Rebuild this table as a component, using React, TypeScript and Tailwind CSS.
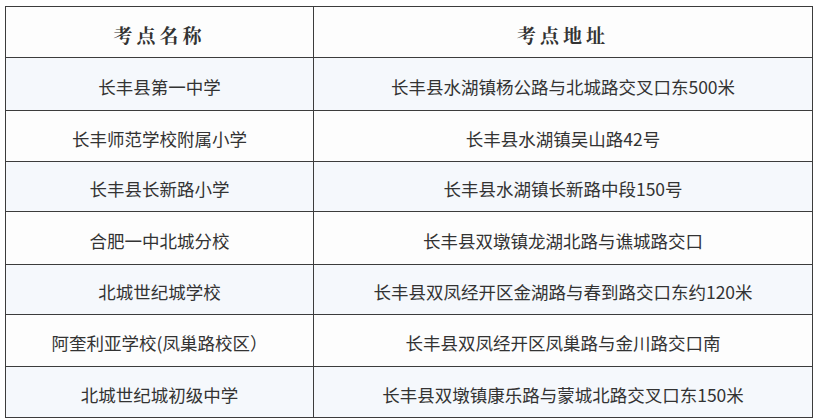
import React from "react";

const rows: [string, string, string][] = [
  ["长丰县第一中学", "长丰县水湖镇杨公路与北城路交叉口东500米", "h-[53px] bg-[#f5f8fc]"],
  ["长丰师范学校附属小学", "长丰县水湖镇吴山路42号", "h-[51px] bg-[#fdfdfd]"],
  ["长丰县长新路小学", "长丰县水湖镇长新路中段150号", "h-[50px] bg-[#f5f8fc]"],
  ["合肥一中北城分校", "长丰县双墩镇龙湖北路与谯城路交口", "h-[53px] bg-[#fdfdfd]"],
  ["北城世纪城学校", "长丰县双凤经开区金湖路与春到路交口东约120米", "h-[50px] bg-[#f5f8fc]"],
  ["阿奎利亚学校(凤巢路校区）", "长丰县双凤经开区凤巢路与金川路交口南", "h-[52px] bg-[#fdfdfd]"],
  ["北城世纪城初级中学", "长丰县双墩镇康乐路与蒙城北路交叉口东150米", "h-[51px] bg-[#f5f8fc]"],
];

const headCell =
  "border border-[#3c3c3c] text-center align-middle pt-[6px] text-[19px] font-bold tracking-[4px] text-[#333] font-['Noto_Serif_CJK_SC','Noto_Sans_CJK_SC',serif]";
const bodyCell =
  "border border-[#3c3c3c] text-center align-middle pt-[6px] text-[17.5px] font-normal text-[#333] font-['Noto_Sans_CJK_SC','Noto_Sans',sans-serif]";

export default function App() {
  return (
    <div className="w-[819px] h-[420px] bg-white pl-[5px] pt-[6px]">
      <table className="w-[808px] border-collapse border-[1.5px] border-[#3c3c3c] table-fixed">
        <colgroup>
          <col className="w-[308px]" />
          <col />
        </colgroup>
        <tbody>
          <tr className="h-[51px] bg-[#fdfdfd]">
            <td className={headCell}>考点名称</td>
            <td className={headCell}>考点地址</td>
          </tr>
          {rows.map(([a, b, cls], i) => (
            <tr key={i} className={cls}>
              <td className={bodyCell}>{a}</td>
              <td className={bodyCell}>{b}</td>
            </tr>
          ))}
        </tbody>
      </table>
    </div>
  );
}
